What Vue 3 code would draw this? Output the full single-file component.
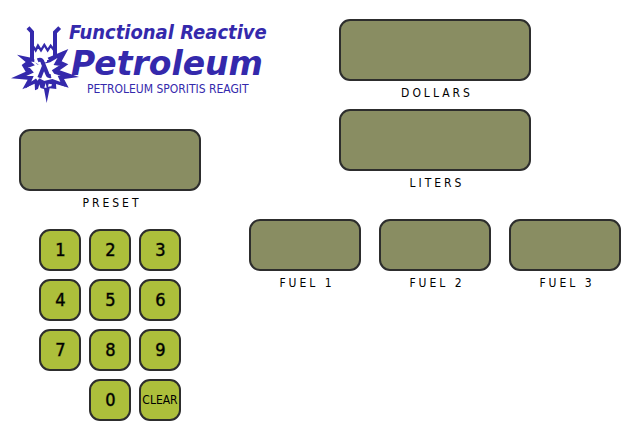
<script setup>
const keys = ['1', '2', '3', '4', '5', '6', '7', '8', '9', '0', 'CLEAR']
const totals = [
  { id: 'dollars', label: 'DOLLARS' },
  { id: 'liters', label: 'LITERS' },
]
const fuels = [
  { id: 'fuel1', label: 'FUEL 1' },
  { id: 'fuel2', label: 'FUEL 2' },
  { id: 'fuel3', label: 'FUEL 3' },
]
</script>

<template>
  <main class="pump">
    <section class="left">
      <header class="brand">
        <svg class="emblem" viewBox="18 27 204 240" aria-hidden="true">
          <path
            class="burst"
            d="M36 119L82 129L100 140L116 145L132 136L128 128L190 102L170 139L190 148L164 166L222 186L177 192L191 218L153 207L154 222L134 220L125 264L117 222L106 219L90 226L89 206L52 223L68 194L18 190L62 170L50 150L62 141Z"
          />
          <path
            class="glow inner"
            d="M64 133L92 138L98 144L126 140L134 138L168 118L152 147L172 150L146 167L150 173L190 185L164 186L174 208L142 196L130 199L118 202L104 195L98 204L92 196L70 210L80 187L46 187L80 171L66 155L82 149Z"
          />
          <path class="glow" d="M88 126H126V140L104 150L88 142Z" />
          <path class="rail" d="M69 38L81 51V134M164 38L150 52V124" />
          <path class="crack" d="M85 95L92 106L99 92L108 106L118 90L128 106L137 92L147 105" />
          <path class="lambda" d="M98 136C109 131 112 138 114 145L127 177C129 184 133 184 138 183M117 153L103 188" />
          <path class="glow" d="M98 226L103 208L107 221ZM118 218L122 204L125 218ZM131 206L141 208L139 214L129 215Z" />
        </svg>
        <h1 class="name">
          <span class="line-one">Functional Reactive</span>
          <span class="line-two">Petroleum</span>
          <span class="motto">PETROLEUM SPORITIS REAGIT</span>
        </h1>
      </header>
      <div class="meter preset">
        <output id="preset" class="screen tall"></output>
        <label class="caption" for="preset">PRESET</label>
      </div>
      <div class="keypad">
        <button
          v-for="key in keys"
          :key="key"
          type="button"
          class="key"
          :class="{ zero: key === '0', clear: key === 'CLEAR' }"
        >{{ key }}</button>
      </div>
    </section>
    <section class="right">
      <div v-for="item in totals" :key="item.id" class="meter total">
        <output :id="item.id" class="screen tall"></output>
        <label class="caption" :for="item.id">{{ item.label }}</label>
      </div>
      <div class="fuels">
        <div v-for="item in fuels" :key="item.id" class="meter">
          <output :id="item.id" class="screen"></output>
          <label class="caption" :for="item.id">{{ item.label }}</label>
        </div>
      </div>
    </section>
  </main>
</template>

<style>
body {
  margin: 0;
  background: #fff;
}
</style>

<style scoped>
.pump {
  display: grid;
  grid-template-columns: 182px minmax(0, 1fr);
  column-gap: 48px;
  padding: 19px;
  box-sizing: border-box;
  font-family: "DejaVu Sans", sans-serif;
  color: #000;
}
.left {
  display: flex;
  flex-direction: column;
}
.brand {
  display: flex;
  align-items: flex-start;
  height: 110px;
  margin-left: -8px;
  color: #3429ac;
}
.emblem {
  flex: none;
  width: 68px;
  height: 80px;
  margin-top: 5px;
}
.rail,
.crack,
.lambda {
  fill: none;
  stroke: currentColor;
}
.rail {
  stroke-width: 12;
}
.crack {
  stroke-width: 7;
}
.burst {
  fill: currentColor;
}
.glow {
  fill: #fff;
}
.inner {
  stroke: currentColor;
  stroke-width: 8;
}
.lambda {
  stroke-width: 12;
}
.name {
  display: flex;
  flex-direction: column;
  margin: 0 0 0 -10px;
  font-weight: 400;
  white-space: nowrap;
}
.line-one {
  font: italic bold 20px/26px "DejaVu Sans Condensed", "DejaVu Sans", sans-serif;
}
.line-two {
  padding-left: 2px;
  font: italic bold 33px/37px "DejaVu Sans", sans-serif;
}
.motto {
  padding-left: 18px;
  font: 12px/14px "DejaVu Sans Condensed", "DejaVu Sans", sans-serif;
}
.meter {
  display: flex;
  flex-direction: column;
  gap: 4px;
}
.screen {
  height: 52px;
  box-sizing: border-box;
  border: 2px solid #2d2d2d;
  border-radius: 11px;
  background: #898d62;
}
.tall {
  height: 62px;
}
.caption {
  padding-left: 4px;
  font: 12px/16px "DejaVu Sans Condensed", "DejaVu Sans", sans-serif;
  letter-spacing: 3px;
  text-align: center;
}
.keypad {
  display: grid;
  grid-template-columns: repeat(3, 42px);
  justify-content: center;
  gap: 8px;
  margin-top: 18px;
}
.key {
  height: 42px;
  padding: 0 0 0 1px;
  border: 2px solid #2d2d2d;
  border-radius: 11px;
  background: #adbf3b;
  color: #000;
  font: 18px/38px "DejaVu Sans Condensed", "DejaVu Sans", sans-serif;
  -webkit-text-stroke: 1px rgba(0, 0, 0, 0.45);
}
.zero {
  grid-column: 2;
}
.clear {
  padding: 0;
  font-size: 12px;
  -webkit-text-stroke: 0;
}
.right {
  display: flex;
  flex-direction: column;
  gap: 8px;
}
.total {
  width: 192px;
  align-self: center;
}
.fuels {
  display: grid;
  grid-template-columns: repeat(3, minmax(0, 1fr));
  gap: 18px;
  margin-top: 20px;
}
</style>
